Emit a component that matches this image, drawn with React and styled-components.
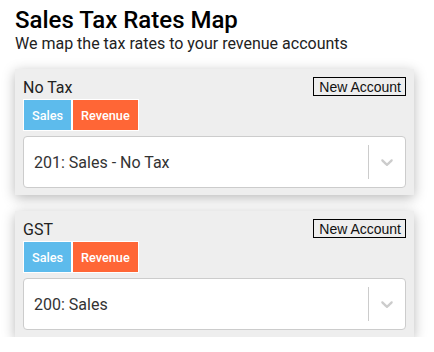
import React from "react";
import styled, { createGlobalStyle } from "styled-components";

const GlobalStyle = createGlobalStyle`
  *, *::before, *::after {
    box-sizing: border-box;
  }
  body {
    margin: 0;
    background: #fff;
    font-family: Roboto, "Noto Sans", sans-serif;
    color: #222;
  }
`;

const StyledPage = styled.div`
  padding: 6px 20px 0 15px;
  h1 {
    margin: 0;
    font-size: 24px;
    font-weight: 500;
    line-height: 28px;
    color: #000;
  }
  p {
    margin: 0;
    font-size: 16px;
    line-height: 19px;
    color: #222;
  }
`;

const StyledList = styled.div`
  display: flex;
  flex-direction: column;
  gap: 16px;
  margin-top: 16px;
`;

const StyledCard = styled.div`
  background: #eee;
  box-shadow: 0 3px 12px rgba(0, 0, 0, 0.28);
  padding: 7px 8px;
  .head {
    height: 22px;
    display: flex;
    justify-content: space-between;
    align-items: flex-start;
    h3 {
      margin: 0;
      font-size: 16px;
      font-weight: 400;
      line-height: 19px;
      color: #222;
      padding-top: 2px;
    }
  }
`;

const StyledNewButton = styled.button`
  font-family: "Liberation Sans", Arial, sans-serif;
  font-size: 14px;
  line-height: 16px;
  height: 19px;
  padding: 0 4px 0 5px;
  border: 1px solid #000;
  background: transparent;
  color: #111;
  margin-top: 1px;
`;

const StyledBadges = styled.div`
  display: flex;
  margin-top: 1px;
`;

const StyledBadge = styled.span`
  background: ${(p) => p.color};
  color: #fff;
  font-size: 12.7px;
  font-weight: 500;
  border: 1px solid #fff;
  padding: 0 8px;
  height: 32px;
  display: flex;
  align-items: center;
`;

const StyledSelect = styled.div`
  margin-top: 5px;
  height: 52px;
  background: #fff;
  border: 1px solid #ccc;
  border-radius: 4px;
  display: flex;
  align-items: center;
  .value {
    flex: 1;
    padding-left: 10px;
    font-size: 16px;
    color: #333;
  }
  .separator {
    width: 1px;
    align-self: stretch;
    margin: 8px 0;
    background: #ccc;
  }
  .indicator {
    width: 36px;
    display: flex;
    justify-content: center;
    color: #ccc;
  }
`;

const Chevron = () => (
  <svg width="20" height="20" viewBox="0 0 20 20" fill="currentColor">
    <path d="M4.516 7.548c0.436-0.446 1.043-0.481 1.576 0l3.908 3.747 3.908-3.747c0.533-0.481 1.141-0.446 1.574 0 0.436 0.445 0.408 1.197 0 1.615-0.406 0.418-4.695 4.502-4.695 4.502-0.217 0.223-0.502 0.335-0.787 0.335s-0.57-0.112-0.789-0.335c0 0-4.287-4.084-4.695-4.502s-0.436-1.170 0-1.615z" />
  </svg>
);

const rates = [
  { name: "No Tax", account: "201: Sales - No Tax" },
  { name: "GST", account: "200: Sales" },
];

const TaxCard = ({ name, account }) => (
  <StyledCard>
    <div className="head">
      <h3>{name}</h3>
      <StyledNewButton>New Account</StyledNewButton>
    </div>
    <StyledBadges>
      <StyledBadge color="#5dbbec">Sales</StyledBadge>
      <StyledBadge color="#ff6636">Revenue</StyledBadge>
    </StyledBadges>
    <StyledSelect>
      <div className="value">{account}</div>
      <div className="separator" />
      <div className="indicator">
        <Chevron />
      </div>
    </StyledSelect>
  </StyledCard>
);

export default function App() {
  return (
    <>
      <GlobalStyle />
      <StyledPage>
        <h1>Sales Tax Rates Map</h1>
        <p>We map the tax rates to your revenue accounts</p>
        <StyledList>
          {rates.map((r) => (
            <TaxCard key={r.name} {...r} />
          ))}
        </StyledList>
      </StyledPage>
    </>
  );
}
